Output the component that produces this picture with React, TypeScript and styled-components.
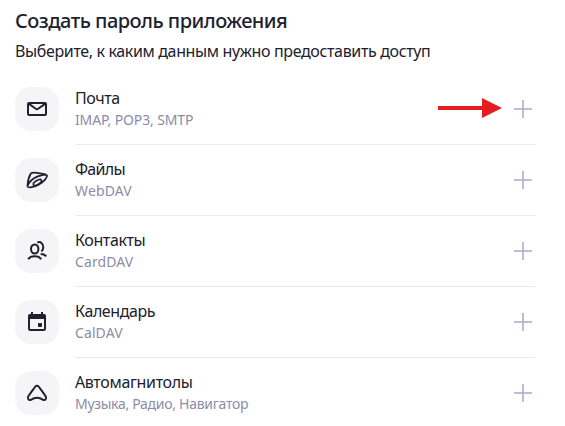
import type { ReactNode } from "react";
import styled, { createGlobalStyle } from "styled-components";

const GlobalStyle = createGlobalStyle`
  * { box-sizing: border-box; }
  body {
    margin: 0;
    background: #fff;
    color: #21202e;
    font-family: "Noto Sans", "Open Sans", sans-serif;
  }
`;

const Page = styled.main`
  width: 565px;
  height: 426px;
  padding: 8px 30px 0 15px;
  overflow: hidden;
`;

const Title = styled.h1`
  margin: 0;
  font-size: 20px;
  line-height: 26px;
  font-weight: 500;
  letter-spacing: -0.52px;
  white-space: nowrap;
`;

const Subtitle = styled.p`
  margin: 7px 0 13px;
  font-size: 16px;
  line-height: 20px;
  letter-spacing: -0.36px;
  white-space: nowrap;
`;

const List = styled.ul`
  margin: 0;
  padding: 0;
  list-style: none;
`;

const Row = styled.li`
  display: flex;
  gap: 16px;
  height: 71px;
`;

const IconTile = styled.span`
  display: flex;
  flex: none;
  align-items: center;
  justify-content: center;
  width: 44px;
  height: 44px;
  margin-top: 13px;
  border-radius: 16px;
  background: #f5f5f7;
`;

const Content = styled.div<{ $last: boolean }>`
  display: flex;
  flex: 1;
  align-items: center;
  justify-content: space-between;
  border-bottom: 1px solid ${(p) => (p.$last ? "transparent" : "#e9e9ef")};
`;

const Texts = styled.div`
  display: flex;
  flex-direction: column;
  white-space: nowrap;
`;

const Name = styled.span<{ $tracking: number }>`
  margin-bottom: 1px;
  font-size: 16px;
  line-height: 21px;
  letter-spacing: ${(p) => p.$tracking}px;
`;

const Protocols = styled.span<{ $tracking: number }>`
  color: #8c8ca6;
  font-size: 14px;
  line-height: 20px;
  letter-spacing: ${(p) => p.$tracking}px;
`;

const Actions = styled.div`
  display: flex;
  align-items: center;
  gap: 11px;
`;

const AddButton = styled.button`
  display: flex;
  padding: 0;
  border: 0;
  margin-right: 2px;
  background: none;
`;

const ArrowShape = styled.svg`
  display: block;
  margin-bottom: 2px;
`;

const Glyph = ({ children }: { children: ReactNode }) => (
  <svg width="24" height="24" viewBox="0 0 24 24" fill="none" stroke="#21202e" strokeWidth="2" strokeLinejoin="round">
    {children}
  </svg>
);

const MailIcon = () => (
  <Glyph>
    <rect x="3" y="6" width="18" height="12" rx="1" />
    <path d="M3.600 6.600 10.800 11.700a2 2 0 0 0 2.400 0L20.400 6.600" />
  </Glyph>
);

const DiskIcon = () => (
  <Glyph>
    <path d="M2.500 18.500C3 19.800 9 19.500 14 16.500 19 13.500 22.500 9.500 22 7.500 21.500 6 14 7 9 10.300 5 13 2.200 17 2.500 18.500Z" strokeWidth="1.800" />
    <path d="M2.600 17.500C2.800 13 4 8.500 5.800 5.500 7.200 4 15.500 4.700 21.200 6.700" strokeWidth="1.800" />
    <ellipse cx="12.400" cy="14.500" rx="4.600" ry="2" transform="rotate(-31 12.400 14.500)" strokeWidth="1.700" />
  </Glyph>
);

const ContactsIcon = () => (
  <Glyph>
    <ellipse cx="9.700" cy="10" rx="3.700" ry="4.600" />
    <path d="M3.200 20.200C4.500 18.200 6.700 17.300 9.700 17.300s5.200.9 6.500 2.900M12.300 3.500c3.200-1.300 6 .9 6 4.700 0 2-.7 3.400-1.900 4.200M15.700 15c2.200 0 4 .7 5.600 2.200" />
  </Glyph>
);

const CalendarIcon = () => (
  <Glyph>
    <path d="M4 8v10.700A1.300 1.300 0 0 0 5.300 20H18.700A1.300 1.300 0 0 0 20 18.700V8" />
    <path d="M3 9V5.700A1.700 1.700 0 0 1 4.700 4H6V2h2v2h8V2h2v2h1.300A1.700 1.700 0 0 1 21 5.700V9Z" fill="#21202e" stroke="none" />
    <rect x="13" y="13" width="4" height="4" rx=".8" fill="#21202e" stroke="none" />
  </Glyph>
);

const NavigatorIcon = () => (
  <Glyph>
    <path d="M10.400 5.500a1.950 1.950 0 0 1 3.200 0C16.200 9 19 12.400 20.800 15.600c1 2.100-.6 4-2.700 3.200-3.700-2.400-8.500-2.400-12.200 0-2.100.8-3.700-1.100-2.700-3.200C5 12.400 7.800 9 10.400 5.500Z" />
  </Glyph>
);

const PlusIcon = () => (
  <svg width="20" height="20" viewBox="0 0 20 20" fill="#b1b4cb">
    <rect x="1" y="9.150" width="18" height="1.700" />
    <rect x="9.150" y="1" width="1.700" height="18" />
  </svg>
);

const Arrow = () => (
  <ArrowShape width="64" height="20" viewBox="0 0 64 20" fill="#e71c1e">
    <path d="M0 8H44V0L64 10 44 20V12H0Z" />
  </ArrowShape>
);

type Service = {
  name: string;
  nameTracking: number;
  protocols: string;
  protocolsTracking: number;
  icon: ReactNode;
  highlighted?: boolean;
};

const services: Service[] = [
  { name: "Почта", nameTracking: -0.4, protocols: "IMAP, POP3, SMTP", protocolsTracking: -0.13, icon: <MailIcon />, highlighted: true },
  { name: "Файлы", nameTracking: -0.7, protocols: "WebDAV", protocolsTracking: 0.15, icon: <DiskIcon /> },
  { name: "Контакты", nameTracking: -0.38, protocols: "CardDAV", protocolsTracking: 0.1, icon: <ContactsIcon /> },
  { name: "Календарь", nameTracking: -0.42, protocols: "CalDAV", protocolsTracking: 0.1, icon: <CalendarIcon /> },
  { name: "Автомагнитолы", nameTracking: -0.35, protocols: "Музыка, Радио, Навигатор", protocolsTracking: -0.29, icon: <NavigatorIcon /> },
];

export default function App() {
  return (
    <Page>
      <GlobalStyle />
      <Title>Создать пароль приложения</Title>
      <Subtitle>Выберите, к каким данным нужно предоставить доступ</Subtitle>
      <List>
        {services.map((s, i) => (
          <Row key={s.name}>
            <IconTile>{s.icon}</IconTile>
            <Content $last={i === services.length - 1}>
              <Texts>
                <Name $tracking={s.nameTracking}>{s.name}</Name>
                <Protocols $tracking={s.protocolsTracking}>{s.protocols}</Protocols>
              </Texts>
              <Actions>
                {s.highlighted && <Arrow />}
                <AddButton aria-label={`Добавить: ${s.name}`}>
                  <PlusIcon />
                </AddButton>
              </Actions>
            </Content>
          </Row>
        ))}
      </List>
    </Page>
  );
}
